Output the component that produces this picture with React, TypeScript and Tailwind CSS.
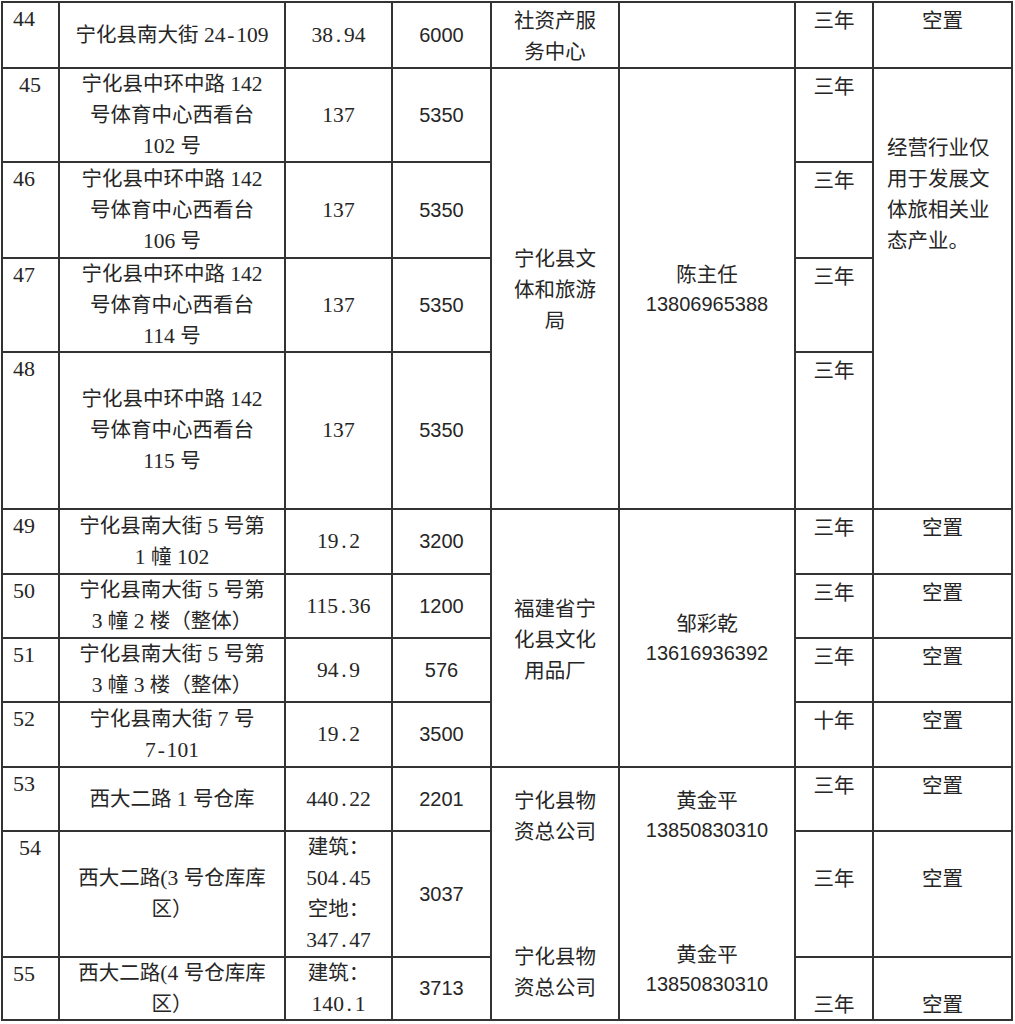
import React from 'react'

const serif = "font-['Liberation_Serif','Noto_Sans_CJK_SC',serif]"
const sans = "font-['Liberation_Sans','Noto_Sans_CJK_SC',sans-serif]"
const cjk = "font-['Noto_Sans_CJK_SC',sans-serif]"

// ascii runs a touch larger, and half-width punctuation takes a full digit cell,
// like the original document font
function Sim({ text }: { text: string }) {
  const parts = text.match(/[\x20-\x7e]+|[^\x20-\x7e]+/g) || []
  return (
    <>
      {parts.map((p, i) =>
        /^[\x20-\x7e]+$/.test(p) ? (
          <span key={i} className="text-[1.05em]">
            {p.split('').map((ch, j) =>
              ch === '.' || ch === '-' ? (
                <span key={j} className="inline-block w-[0.5em] text-center">
                  {ch}
                </span>
              ) : (
                <React.Fragment key={j}>{ch}</React.Fragment>
              ),
            )}
          </span>
        ) : (
          <React.Fragment key={i}>{p}</React.Fragment>
        ),
      )}
    </>
  )
}

function Lines({ lines }: { lines: string[] }) {
  return (
    <>
      {lines.map((l, i) => (
        <div key={i} className="whitespace-pre">
          <Sim text={l} />
        </div>
      ))}
    </>
  )
}

function Num({ n, indent }: { n: string; indent?: boolean }) {
  return (
    <div className={`bg-white ${serif} text-[22px] ${indent ? 'pl-[16px]' : 'pl-[10px]'}`}>
      {n}
    </div>
  )
}

function Mid({ lines, font = serif, size = 'text-[20.5px]' }: { lines: string[]; font?: string; size?: string }) {
  return (
    <div className={`bg-white flex flex-col items-center justify-center text-center ${font} ${size}`}>
      <Lines lines={lines} />
    </div>
  )
}

function Rent({ v }: { v: string }) {
  return (
    <div className={`bg-white flex items-center justify-center ${sans} text-[20px]`}>{v}</div>
  )
}

function Top({ text, pad = 'pt-[1px]' }: { text: string; pad?: string }) {
  return <div className={`bg-white text-center ${cjk} text-[20.5px] ${pad}`}>{text}</div>
}

function Person({ name, phone }: { name: string; phone: string }) {
  return (
    <div className="text-center">
      <div className={`${cjk} text-[20.5px]`}>{name}</div>
      <div className={`${sans} text-[20px]`}>{phone}</div>
    </div>
  )
}

export default function App() {
  return (
    <div className="bg-white min-h-screen">
      <div className="ml-px mt-px w-[1012px] grid grid-cols-[55px_224px_105px_97px_126px_174px_76px_137px] grid-rows-[64px_92px_94px_92px_155px_63px_62px_62px_63px_62px_124px_61px] gap-[2px] border-2 border-[#333] bg-[#333] text-[#262626] leading-[31px]">
        {/* 44 */}
        <Num n="44" />
        <Mid lines={['宁化县南大街 24-109']} />
        <Mid lines={['38.94']} />
        <Rent v="6000" />
        <div className={`bg-white text-center ${cjk} text-[20.5px] pt-[1px]`}>
          <div>社资产服</div>
          <div>务中心</div>
        </div>
        <div className="bg-white" />
        <Top text="三年" />
        <Top text="空置" />

        {/* 45 */}
        <Num n="45" indent />
        <Mid lines={['宁化县中环中路 142', '号体育中心西看台', '102 号']} />
        <Mid lines={['137']} />
        <Rent v="5350" />
        <div className={`bg-white row-span-4 flex flex-col items-center justify-center text-center ${cjk} text-[20.5px]`}>
          <div>宁化县文</div>
          <div>体和旅游</div>
          <div>局</div>
        </div>
        <div className="bg-white row-span-4 flex items-center justify-center">
          <Person name="陈主任" phone="13806965388" />
        </div>
        <Top text="三年" />
        <div className={`bg-white row-span-4 pl-[13px] pt-[62px] ${cjk} text-[20.5px]`}>
          <div>经营行业仅</div>
          <div>用于发展文</div>
          <div>体旅相关业</div>
          <div>态产业。</div>
        </div>

        {/* 46 */}
        <Num n="46" />
        <Mid lines={['宁化县中环中路 142', '号体育中心西看台', '106 号']} />
        <Mid lines={['137']} />
        <Rent v="5350" />
        <Top text="三年" />

        {/* 47 */}
        <Num n="47" />
        <Mid lines={['宁化县中环中路 142', '号体育中心西看台', '114 号']} />
        <Mid lines={['137']} />
        <Rent v="5350" />
        <Top text="三年" />

        {/* 48 */}
        <Num n="48" />
        <Mid lines={['宁化县中环中路 142', '号体育中心西看台', '115 号']} />
        <Mid lines={['137']} />
        <Rent v="5350" />
        <Top text="三年" />

        {/* 49 */}
        <Num n="49" />
        <Mid lines={['宁化县南大街 5 号第', '1 幢 102']} />
        <Mid lines={['19.2']} />
        <Rent v="3200" />
        <div className={`bg-white row-span-4 flex flex-col items-center justify-center text-center ${cjk} text-[20.5px]`}>
          <div>福建省宁</div>
          <div>化县文化</div>
          <div>用品厂</div>
        </div>
        <div className="bg-white row-span-4 flex items-center justify-center">
          <Person name="邹彩乾" phone="13616936392" />
        </div>
        <Top text="三年" />
        <Top text="空置" />

        {/* 50 */}
        <Num n="50" />
        <Mid lines={['宁化县南大街 5 号第', '3 幢 2 楼（整体）']} />
        <Mid lines={['115.36']} />
        <Rent v="1200" />
        <Top text="三年" />
        <Top text="空置" />

        {/* 51 */}
        <Num n="51" />
        <Mid lines={['宁化县南大街 5 号第', '3 幢 3 楼（整体）']} />
        <Mid lines={['94.9']} />
        <Rent v="576" />
        <Top text="三年" />
        <Top text="空置" />

        {/* 52 */}
        <Num n="52" />
        <Mid lines={['宁化县南大街 7 号', '7-101']} />
        <Mid lines={['19.2']} />
        <Rent v="3500" />
        <Top text="十年" />
        <Top text="空置" />

        {/* 53 */}
        <Num n="53" />
        <Mid lines={['西大二路 1 号仓库']} />
        <Mid lines={['440.22']} />
        <Rent v="2201" />
        <div className={`bg-white row-span-3 pt-[16px] text-center ${cjk} text-[20.5px]`}>
          <div>宁化县物</div>
          <div>资总公司</div>
          <div className="mt-[94px]">宁化县物</div>
          <div>资总公司</div>
        </div>
        <div className="bg-white row-span-3 pt-[16px]">
          <Person name="黄金平" phone="13850830310" />
          <div className="mt-[92px]">
            <Person name="黄金平" phone="13850830310" />
          </div>
        </div>
        <Top text="三年" />
        <Top text="空置" />

        {/* 54 */}
        <Num n="54" indent />
        <Mid lines={['西大二路(3 号仓库库', '区）']} />
        <div className={`bg-white text-center ${serif} text-[20.5px]`}>
          <Lines lines={['建筑：', '504.45', '空地：', '347.47']} />
        </div>
        <Rent v="3037" />
        <Top text="三年" pad="pt-[30px]" />
        <Top text="空置" pad="pt-[30px]" />

        {/* 55 */}
        <Num n="55" />
        <Mid lines={['西大二路(4 号仓库库', '区）']} />
        <div className={`bg-white text-center ${serif} text-[20.5px]`}>
          <Lines lines={['建筑：', '140.1']} />
        </div>
        <Rent v="3713" />
        <Top text="三年" pad="pt-[30px]" />
        <Top text="空置" pad="pt-[30px]" />
      </div>
    </div>
  )
}
